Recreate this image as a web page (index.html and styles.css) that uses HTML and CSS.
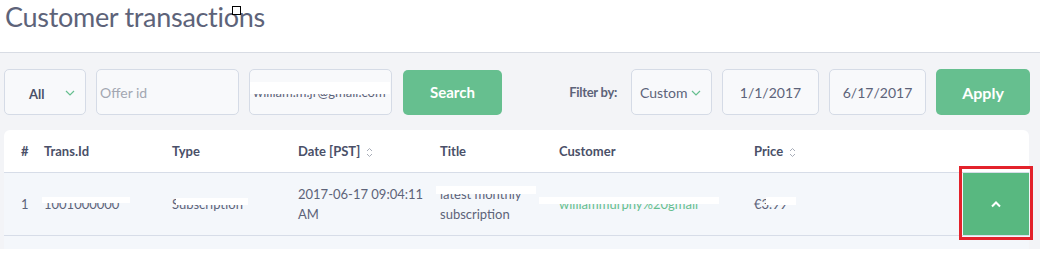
FILE: index.html
```html
<!DOCTYPE html>
<html lang="en">
<head>
    <meta charset="UTF-8">
    <title>Customer transactions</title>
    <link rel="stylesheet" href="styles.css">
</head>
<body>
    <div class="page">
        <div class="page-header">
            <h1>Customer transactions</h1>
            <span class="cursor-mark"></span>
        </div>

        <div class="content">
            <div class="filters">
                <div class="select select-type">
                    <span class="select-value">All</span>
                    <svg class="chevron" width="10" height="6" viewBox="0 0 10 6"><path d="M1 1l4 4 4-4" fill="none" stroke="#66bf8f" stroke-width="1.2"/></svg>
                </div>
                <div class="input input-offer"><span class="placeholder">Offer id</span></div>
                <div class="input input-email">
                    <span class="redact">
                        <span class="hidden-text">william.m.jr@gmail.com</span>
                        <span class="mask mask-email"></span>
                    </span>
                </div>
                <button class="btn btn-search">Search</button>

                <span class="filter-label">Filter by:</span>
                <div class="select select-range">
                    <span class="select-value light">Custom</span>
                    <svg class="chevron" width="10" height="6" viewBox="0 0 10 6"><path d="M1 1l4 4 4-4" fill="none" stroke="#66bf8f" stroke-width="1.2"/></svg>
                </div>
                <div class="input input-date">1/1/2017</div>
                <div class="input input-date">6/17/2017</div>
                <button class="btn btn-apply">Apply</button>
            </div>

            <div class="card">
                <div class="row head">
                    <div class="cell">#</div>
                    <div class="cell">Trans.Id</div>
                    <div class="cell">Type</div>
                    <div class="cell">Date [PST]
                        <svg class="sort" width="7" height="11" viewBox="0 0 7 11"><path d="M1 4l2.5-2.5L6 4M1 7l2.5 2.5L6 7" fill="none" stroke="#a8adb8" stroke-width="1"/></svg>
                    </div>
                    <div class="cell">Title</div>
                    <div class="cell">Customer</div>
                    <div class="cell">Price
                        <svg class="sort" width="7" height="11" viewBox="0 0 7 11"><path d="M1 4l2.5-2.5L6 4M1 7l2.5 2.5L6 7" fill="none" stroke="#a8adb8" stroke-width="1"/></svg>
                    </div>
                    <div class="cell"></div>
                </div>
                <div class="row item">
                    <div class="cell">1</div>
                    <div class="cell">
                        <span class="redact">
                            <span class="hidden-text">1001000000</span>
                            <span class="mask mask-id"></span>
                        </span>
                    </div>
                    <div class="cell">
                        <span class="redact">
                            <span class="hidden-text">Subscription</span>
                            <span class="mask mask-type"></span>
                        </span>
                    </div>
                    <div class="cell two-line">2017-06-17 09:04:11<br>AM</div>
                    <div class="cell two-line">
                        <span class="redact">
                            <span class="hidden-text">latest monthly</span>
                            <span class="mask mask-title"></span>
                        </span><br>subscription
                    </div>
                    <div class="cell">
                        <span class="redact">
                            <span class="hidden-text link">williammurphy%20gmail</span>
                            <span class="mask mask-customer"></span>
                        </span>
                    </div>
                    <div class="cell">
                        <span class="redact">
                            <span class="hidden-text">€3.99</span>
                            <span class="mask mask-price"></span>
                        </span>
                    </div>
                    <div class="cell action">
                        <button class="btn-expand">
                            <svg width="12" height="8" viewBox="0 0 12 8"><path d="M2 6.5l4-4 4 4" fill="none" stroke="#fff" stroke-width="2"/></svg>
                        </button>
                        <span class="highlight"></span>
                    </div>
                </div>
                <div class="row item empty"></div>
            </div>
        </div>
    </div>
</body>
</html>
```

FILE: styles.css
```css
body {
    margin: 0;
    background: #fff;
    font-family: Lato, "Open Sans", sans-serif;
    color: #5d6379;
}
.page {
    width: 1040px;
    height: 249px;
    overflow: hidden;
}
.page-header {
    position: relative;
    height: 52px;
    border-bottom: 1px solid #d8dce4;
}
.page-header h1 {
    margin: 0;
    padding: 0 0 0 5px;
    font-size: 27px;
    font-weight: 400;
    line-height: 34px;
    color: #5d6379;
    letter-spacing: -0.3px;
}
.cursor-mark {
    position: absolute;
    left: 232px;
    top: 6px;
    width: 7px;
    height: 7px;
    border: 1px solid #000;
    background: #fff;
}
.content {
    background: #f3f4f7;
    height: 196px;
    padding: 16px 11px 0 4px;
}

/* filter bar */
.filters {
    display: flex;
    align-items: center;
    height: 46px;
    width: 1026px;
}
.select,
.input {
    box-sizing: border-box;
    height: 46px;
    border: 1px solid #d5dbe6;
    border-radius: 5px;
    background: #f8f9fb;
    font-size: 13px;
    display: flex;
    align-items: center;
}
.select {
    justify-content: space-between;
}
.select-type {
    width: 82px;
    padding: 0 10px 0 24px;
}
.select-value {
    font-weight: 700;
    color: #4a5068;
    margin-top: 3px;
}
.select-value.light {
    font-weight: 400;
    color: #5d6379;
    font-size: 14px;
    margin-top: 0;
}
.chevron {
    margin-top: 2px;
}
.input-offer {
    width: 143px;
    margin-left: 10px;
    padding-left: 3px;
}
.placeholder {
    color: #a3a7b2;
    font-size: 14px;
}
.input-email {
    width: 143px;
    margin-left: 10px;
    padding-left: 3px;
    overflow: hidden;
}
.btn {
    height: 45px;
    border: none;
    border-radius: 5px;
    background: #66bf8f;
    color: #fff;
    font-family: Lato, sans-serif;
    font-weight: 700;
    cursor: pointer;
}
.btn-search {
    width: 99px;
    margin-left: 11px;
    font-size: 15px;
}
.filter-label {
    margin-left: auto;
    white-space: nowrap;
    font-size: 13px;
    font-weight: 700;
    letter-spacing: -0.3px;
    color: #5d6379;
}
.select-range {
    width: 81px;
    margin-left: 14px;
    padding: 0 10px 0 8px;
}
.input-date {
    width: 97px;
    margin-left: 10px;
    justify-content: center;
    font-size: 14px;
    color: #5d6379;
}
.btn-apply {
    width: 94px;
    height: 46px;
    margin-left: 10px;
    font-size: 16px;
}

/* table card */
.card {
    margin-top: 15px;
    width: 1025px;
    background: #fff;
    border-radius: 6px 6px 0 0;
}
.row {
    display: grid;
    grid-template-columns: 23px 128px 126px 142px 119px 195px 209px 66px;
    padding-left: 17px;
    align-items: center;
}
.row.head {
    height: 42px;
    border-bottom: 1px solid #d7dde8;
    font-size: 13px;
    font-weight: 700;
    color: #4a5068;
}
.sort {
    vertical-align: middle;
    margin-left: 3px;
}
.row.item {
    height: 62px;
    background: #f4f7fb;
    border-bottom: 1px solid #d7dde8;
    font-size: 13px;
    color: #5d6379;
}
.row.item.empty {
    height: 20px;
    border-bottom: none;
}
.two-line {
    line-height: 20px;
    margin-top: 0;
}
.link {
    color: #66bf8f;
}
.action {
    position: relative;
    height: 62px;
}
.btn-expand {
    width: 66px;
    height: 62px;
    border: none;
    background: #58b880;
    display: flex;
    align-items: center;
    justify-content: center;
    padding: 0;
}
.highlight {
    position: absolute;
    left: -4px;
    right: -4px;
    top: -7px;
    bottom: -5px;
    border: 3px solid #e3222b;
    box-sizing: border-box;
}

/* redacted values */
.redact {
    position: relative;
    display: inline-block;
    white-space: nowrap;
}
.mask {
    position: absolute;
    background: #fff;
}
.mask-email {
    left: -4px;
    right: -4px;
    top: -2px;
    height: 12px;
}
.mask-id {
    left: -2px;
    width: 88px;
    top: 1px;
    height: 6px;
}
.mask-type {
    left: 4px;
    width: 72px;
    top: 2px;
    height: 7px;
}
.mask-title {
    left: -4px;
    width: 100px;
    top: 2px;
    height: 8px;
}
.mask-customer {
    left: -20px;
    width: 180px;
    top: 1px;
    height: 7px;
}
.mask-price {
    left: 12px;
    width: 30px;
    top: 1px;
    height: 8px;
}
```
